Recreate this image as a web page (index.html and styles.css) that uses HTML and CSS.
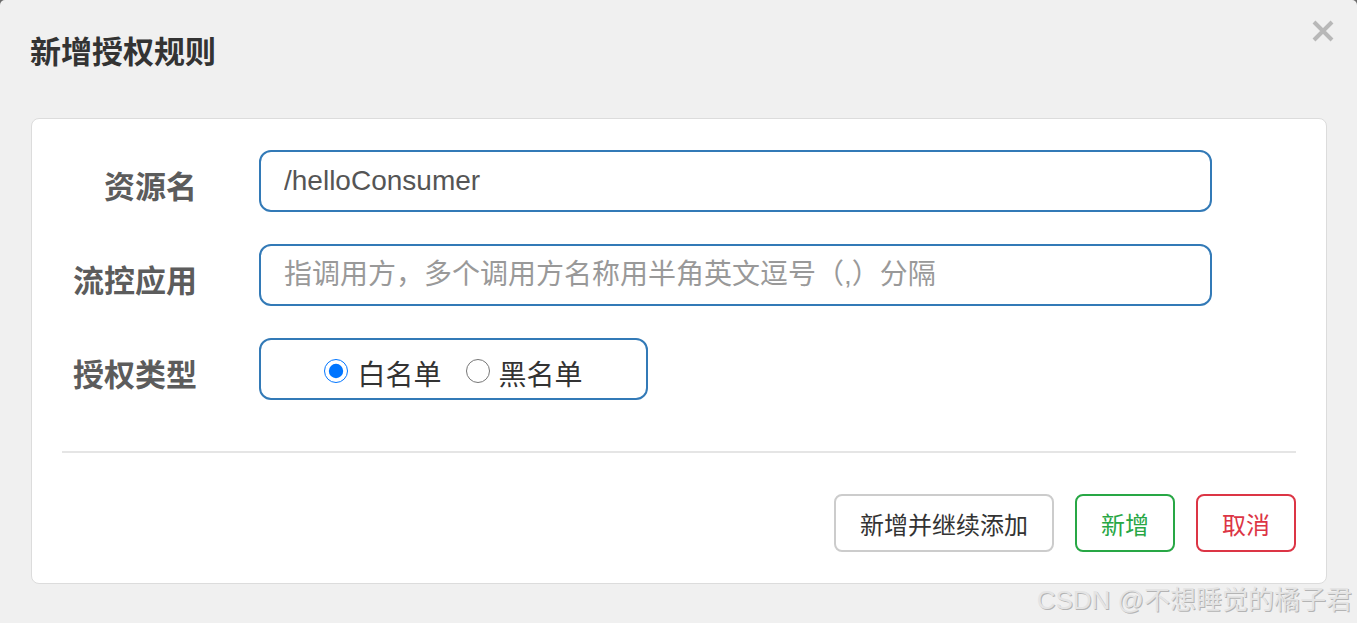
FILE: index.html
```html
<!DOCTYPE html>
<html>
<head>
    <title>新增授权规则</title>
    <link rel="stylesheet" href="styles.css">
</head>
<body>
    <div class="dialog">
        <div class="dialog-header">
            <h4 class="dialog-title">新增授权规则</h4>
            <span class="close">
                <svg width="22" height="22" viewBox="0 0 22 22">
                    <path d="M2 2 L20 20 M20 2 L2 20" stroke="#b8b8b8" stroke-width="4" stroke-linecap="butt"/>
                </svg>
            </span>
        </div>

        <div class="card">
            <form class="rule-form">
                <label class="form-label" for="resource">资源名</label>
                <input class="form-input" type="text" id="resource" value="/helloConsumer">

                <label class="form-label" for="limitApp">流控应用</label>
                <input class="form-input" type="text" id="limitApp" placeholder="指调用方，多个调用方名称用半角英文逗号（,）分隔">

                <label class="form-label">授权类型</label>
                <div class="radio-box">
                    <label class="radio"><input type="radio" name="strategy" checked>白名单</label>
                    <label class="radio"><input type="radio" name="strategy">黑名单</label>
                </div>
            </form>

            <div class="divider"></div>

            <div class="actions">
                <button class="btn btn-default" type="button">新增并继续添加</button>
                <button class="btn btn-success" type="button">新增</button>
                <button class="btn btn-danger" type="button">取消</button>
            </div>
        </div>

        <div class="watermark">CSDN @不想睡觉的橘子君</div>
    </div>
</body>
</html>
```

FILE: styles.css
```css
body {
    margin: 0;
    background-color: #6b6b6b;
    font-family: "Liberation Sans", "Noto Sans CJK SC", sans-serif;
}
.dialog {
    position: relative;
    height: 100vh;
    background-color: #f0f0f0;
    border-radius: 5px 5px 0 0;
    box-sizing: border-box;
    padding-left: 31px;
    padding-right: 30px;
}
.dialog-header {
    display: flex;
    justify-content: space-between;
    align-items: flex-start;
    height: 118px;
    margin-right: -7px;
    margin-left: -1px;
}
.dialog-title {
    margin: 33px 0 0;
    font-size: 31px;
    font-weight: bold;
    color: #333;
    line-height: 40px;
}
.close {
    margin-top: 20px;
    display: block;
    height: 22px;
}
.card {
    background: white;
    border: 1px solid #dcdcdc;
    border-radius: 8px;
    padding: 31px 30px 31px 30px;
    height: 466px;
    box-sizing: border-box;
}
.rule-form {
    display: grid;
    grid-template-columns: 135px 953px;
    column-gap: 62px;
    row-gap: 32px;
    align-items: center;
}
.form-label {
    text-align: right;
    font-size: 31px;
    font-weight: bold;
    color: #5c5c5c;
    padding-top: 6px;
    white-space: nowrap;
}
.form-input {
    height: 62px;
    box-sizing: border-box;
    border: 2px solid #337ab7;
    border-radius: 12px;
    padding: 0 23px;
    font-family: "Liberation Sans", "Noto Sans CJK SC", sans-serif;
    font-size: 28px;
    color: #555;
    outline: none;
}
.form-input::placeholder {
    color: #999;
}
.radio-box {
    width: 389px;
    height: 62px;
    box-sizing: border-box;
    border: 2px solid #337ab7;
    border-radius: 12px;
    display: flex;
    justify-content: center;
    align-items: center;
    gap: 24px;
    padding-top: 8px;
}
.radio {
    display: flex;
    align-items: center;
    font-size: 28px;
    color: #333;
}
.radio input {
    width: 24px;
    height: 24px;
    margin: 0 9px 4px 0;
    accent-color: #0075ff;
}
.divider {
    height: 2px;
    background: #e5e5e5;
    margin: 51px 0 41px;
}
.actions {
    display: flex;
    justify-content: flex-end;
    gap: 21px;
}
.btn {
    height: 58px;
    box-sizing: border-box;
    padding: 0 24px;
    background: white;
    border: 2px solid #ccc;
    border-radius: 8px;
    font-family: "Liberation Sans", "Noto Sans CJK SC", sans-serif;
    font-size: 24px;
    color: #333;
    cursor: pointer;
}
.btn-success {
    border-color: #28a745;
    color: #28a745;
}
.btn-danger {
    border-color: #dc3545;
    color: #dc3545;
}
.watermark {
    position: absolute;
    right: 5px;
    bottom: 7px;
    font-size: 26px;
    color: #e4e4e4;
    text-shadow: 1px 1px 0 #b4b4b4;
}
```
